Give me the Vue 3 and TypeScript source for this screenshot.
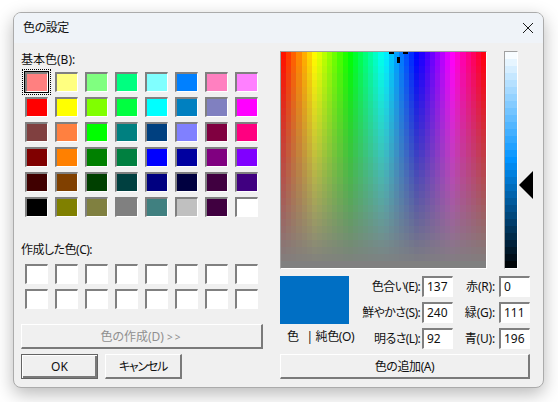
<script setup lang="ts">
import { onMounted, ref } from 'vue'

const basic: string[] = [
  '#ff8080', '#ffff80', '#80ff80', '#00ff80', '#80ffff', '#0080ff', '#ff80c0', '#ff80ff',
  '#ff0000', '#ffff00', '#80ff00', '#00ff40', '#00ffff', '#0080c0', '#8080c0', '#ff00ff',
  '#804040', '#ff8040', '#00ff00', '#008080', '#004080', '#8080ff', '#800040', '#ff0080',
  '#800000', '#ff8000', '#008000', '#008040', '#0000ff', '#0000a0', '#800080', '#8000ff',
  '#400000', '#804000', '#004000', '#004040', '#000080', '#000040', '#400040', '#400080',
  '#000000', '#808000', '#808040', '#808080', '#408080', '#c0c0c0', '#400040', '#ffffff',
]
const custom: number[] = Array.from({ length: 16 }, (_, i) => i)

const spectrum = ref<HTMLCanvasElement | null>(null)
const slider = ref<HTMLCanvasElement | null>(null)

function hsl(h: number, s: number, l: number): string {
  return `hsl(${(h / 240) * 360} ${(s / 240) * 100}% ${(l / 240) * 100}%)`
}

onMounted(() => {
  const sp = spectrum.value
  const spCtx = sp?.getContext('2d')
  if (sp && spCtx) {
    const cols = 40
    const rows = 31
    for (let c = 0; c < cols; c++) {
      for (let r = 0; r < rows; r++) {
        const x0 = Math.round((c * sp.width) / cols)
        const x1 = Math.round(((c + 1) * sp.width) / cols)
        const y0 = Math.round((r * sp.height) / rows)
        const y1 = Math.round(((r + 1) * sp.height) / rows)
        spCtx.fillStyle = hsl((c + 0.5) * (240 / cols), 240 - (r / (rows - 1)) * 240, 120)
        spCtx.fillRect(x0, y0, x1 - x0, y1 - y0)
      }
    }
  }
  const sl = slider.value
  const slCtx = sl?.getContext('2d')
  if (sl && slCtx) {
    const rows = 31
    for (let r = 0; r < rows; r++) {
      const y0 = Math.round((r * sl.height) / rows)
      const y1 = Math.round(((r + 1) * sl.height) / rows)
      slCtx.fillStyle = hsl(137, 240, 240 - ((r + 0.5) / rows) * 240)
      slCtx.fillRect(0, y0, sl.width, y1 - y0)
    }
  }
})
</script>

<template>
  <div class="page">
    <div class="dialog">
      <header class="titlebar">
        <span class="title">色の設定</span>
        <svg class="close" width="12" height="12" viewBox="0 0 12 12">
          <path d="M1 1 L11 11 M11 1 L1 11" stroke="#1a1a1a" stroke-width="1" fill="none" />
        </svg>
      </header>
      <div class="body">
        <section class="left">
          <div class="label basic-label">基本色(B):</div>
          <div class="swatches">
            <div
              v-for="(c, i) in basic"
              :key="i"
              class="swatch"
              :class="{ selected: i === 0 }"
              :style="{ background: c }"
            ></div>
          </div>
          <div class="label custom-label">作成した色(C):</div>
          <div class="swatches">
            <div v-for="i in custom" :key="i" class="swatch blank"></div>
          </div>
          <button class="btn create" disabled>色の作成(D) <span class="arrows">&gt;&gt;</span></button>
          <div class="actions">
            <button class="btn small default">OK</button>
            <button class="btn small cancel">キャンセル</button>
          </div>
        </section>
        <section class="right">
          <div class="pickers">
            <div class="spectrum">
              <canvas ref="spectrum" width="205" height="216"></canvas>
              <i class="cross h1"></i>
              <i class="cross h2"></i>
              <i class="cross v"></i>
            </div>
            <div class="slider">
              <canvas ref="slider" width="12" height="216"></canvas>
              <svg class="marker" width="14" height="28" viewBox="0 0 14 28">
                <path d="M0 14 L14 0 L14 28 Z" fill="#000" />
              </svg>
            </div>
          </div>
          <div class="values">
            <div class="preview-col">
              <div class="preview"></div>
              <div class="preview-label"><span class="solo">色</span>| 純色(O)</div>
            </div>
            <div class="fields">
              <label class="f1">色合い(E):</label><div class="field">137</div>
              <label class="f2">赤(R):</label><div class="field">0</div>
              <label class="f1">鮮やかさ(S):</label><div class="field">240</div>
              <label class="f2">緑(G):</label><div class="field">111</div>
              <label class="f1">明るさ(L):</label><div class="field">92</div>
              <label class="f2">青(U):</label><div class="field">196</div>
            </div>
          </div>
          <button class="btn add">色の追加(A)</button>
        </section>
      </div>
    </div>
  </div>
</template>

<style>
html, body { margin: 0; background: #fff; }
</style>

<style scoped>
.page {
  width: 558px;
  height: 402px;
  box-sizing: border-box;
  padding: 12px 14px 14px 13px;
  overflow: hidden;
  font-family: "Noto Sans", "Noto Sans CJK JP", sans-serif;
  font-size: 12px;
  font-feature-settings: "palt" 1;
  color: #111;
}
.dialog {
  width: 531px;
  height: 376px;
  box-sizing: border-box;
  border: 1px solid #ababab;
  border-radius: 8px;
  background: #f0f0f0;
  box-shadow: 0 6px 18px rgba(0, 0, 0, 0.28);
  overflow: hidden;
}
.titlebar {
  height: 30px;
  background: #eff3f8;
  display: flex;
  align-items: center;
  justify-content: space-between;
  padding: 0 9px 0 9px;
}
.title { font-size: 12px; line-height: 16px; letter-spacing: -0.4px; }
.close { display: block; }
.body {
  display: flex;
  gap: 17px;
  padding: 8px 0 0 7px;
}
.left { width: 242px; display: flex; flex-direction: column; }
.label { line-height: 18px; white-space: nowrap; }
.basic-label { margin-bottom: 3px; }
.custom-label { margin-top: 24px; margin-bottom: 5px; letter-spacing: -0.5px; }
.swatches {
  display: grid;
  grid-template-columns: repeat(8, 23px);
  grid-auto-rows: 20px;
  column-gap: 7px;
  row-gap: 5px;
  padding-left: 4px;
}
.swatch {
  box-sizing: border-box;
  border-style: solid;
  border-width: 2px 1px 1px 2px;
  border-color: #808080 #fff #fff #808080;
  position: relative;
}
.swatch.blank { background: #fff; }
.swatch.selected {
  outline: 1px solid #000;
  outline-offset: 0;
}
.swatch.selected::after {
  content: "";
  position: absolute;
  inset: -5px -4px -4px -5px;
  border: 1px dotted #000;
}
.btn {
  display: block;
  box-sizing: border-box;
  height: 25px;
  padding: 0;
  background: #f0f0f0;
  font: inherit;
  font-feature-settings: "palt" 1;
  color: #111;
  border-style: solid;
  border-width: 1px 2px 2px 1px;
  border-color: #fff #7a7a7a #7a7a7a #fff;
}
.create {
  width: 242px;
  margin-top: 15px;
  color: #8f8f8f;
}
.arrows { letter-spacing: 2px; font-size: 10px; }
.actions { display: flex; gap: 7px; margin-top: 5px; }
.small { width: 77px; }
.default {
  border: 1px solid #646464;
  box-shadow: inset 1px 1px 0 #fff, inset -2px -2px 0 #7a7a7a;
}
.cancel { letter-spacing: -1.2px; }
.right { width: 250px; display: flex; flex-direction: column; }
.pickers { display: flex; gap: 17px; height: 218px; }
.spectrum {
  position: relative;
  width: 207px;
  height: 218px;
  box-sizing: border-box;
  border-style: solid;
  border-width: 1px;
  border-color: #a0a0a0 #fff #fff #a0a0a0;
  overflow: hidden;
}
canvas { display: block; }
.cross { position: absolute; background: #000; display: block; }
.h1 { left: 108px; top: 0; width: 5px; height: 2px; }
.h2 { left: 122px; top: 0; width: 5px; height: 2px; }
.v { left: 116px; top: 5px; width: 3px; height: 6px; }
.slider {
  position: relative;
  width: 14px;
  height: 218px;
  box-sizing: border-box;
  border-style: solid;
  border-width: 1px;
  border-color: #a0a0a0 #fff #fff #a0a0a0;
}
.marker { position: absolute; left: 14px; top: 119px; display: block; }
.values { display: flex; margin-top: 7px; height: 73px; }
.preview-col { width: 69px; flex: none; }
.preview { height: 48px; background: #006fc4; }
.preview-label {
  margin-top: 4px;
  line-height: 18px;
  white-space: nowrap;
  padding-left: 7px;
  letter-spacing: -0.4px;
}
.solo { margin-right: 8px; }
.fields {
  display: grid;
  grid-template-columns: 73px 31px 46px 31px;
  grid-auto-rows: 21px;
  row-gap: 5px;
}
.f1, .f2 { text-align: right; line-height: 21px; white-space: nowrap; }
.f1 { padding-right: 2px; letter-spacing: -0.6px; }
.f2 { padding-right: 4px; letter-spacing: -0.2px; }
.field {
  box-sizing: border-box;
  background: #fff;
  border-style: solid;
  border-width: 2px 1px 1px 2px;
  border-color: #808080 #fff #fff #808080;
  line-height: 18px;
  padding-left: 3px;
}
.add { width: 250px; margin-top: 5px; letter-spacing: -0.4px; }
</style>
